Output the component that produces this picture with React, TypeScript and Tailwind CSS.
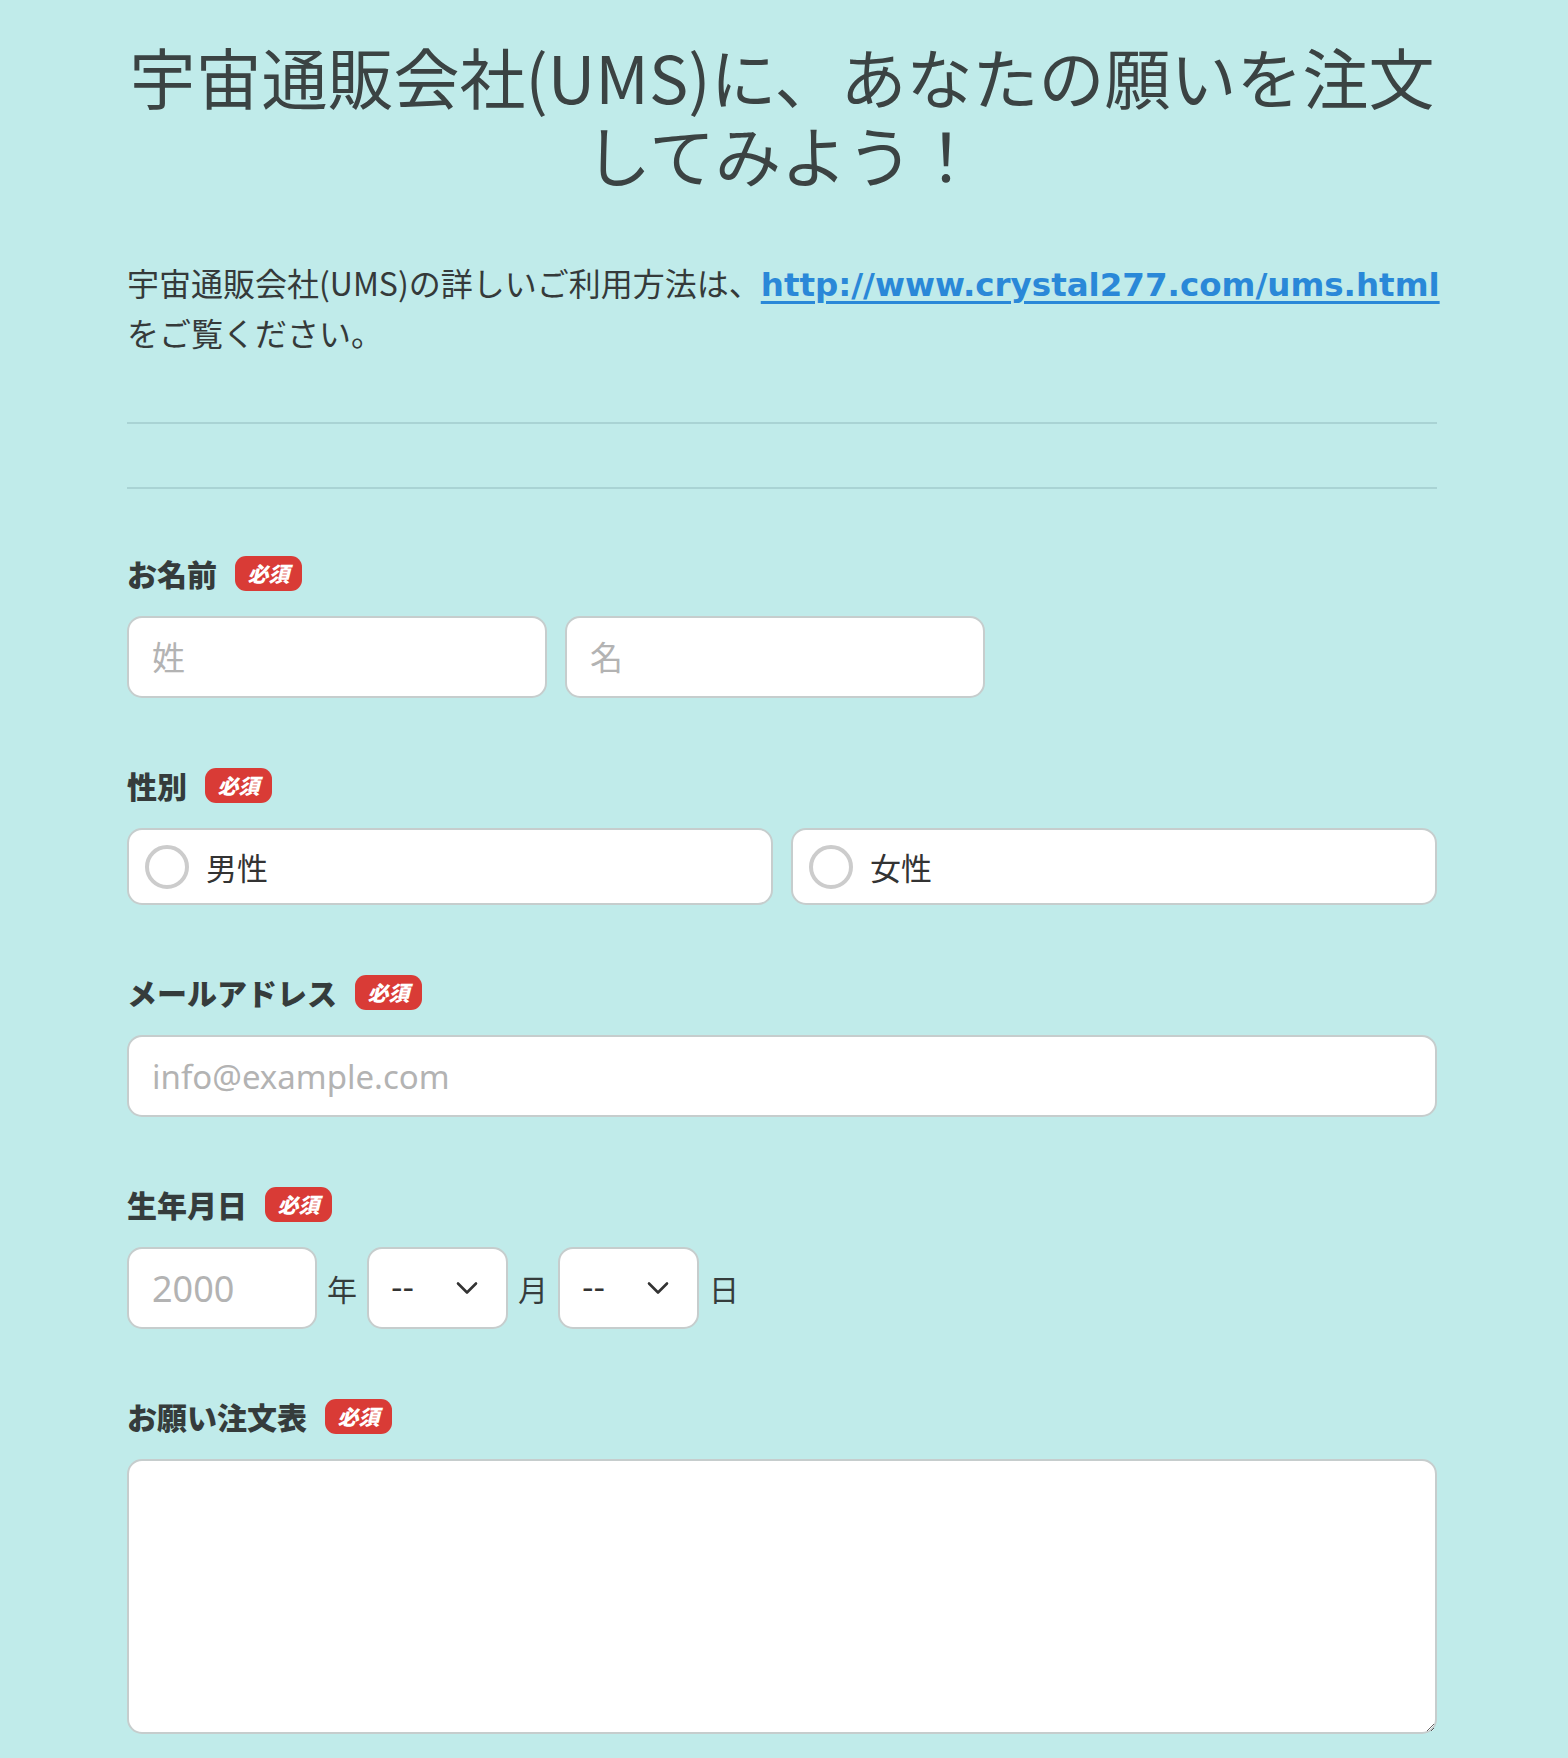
import React from "react";

const Badge = () => (
  <span className="inline-flex h-[35px] w-[67px] items-center justify-center rounded-[11px] bg-[#d93b36] font-['Noto_Sans_CJK_JP',sans-serif] text-[21px] font-black italic leading-none text-white">
    必須
  </span>
);

const Label = ({ children }: { children: React.ReactNode }) => (
  <div className="flex h-[40px] items-center gap-[18px]">
    <span className="font-['Noto_Sans_CJK_JP',sans-serif] text-[30px] font-black leading-[40px] text-[#353c3c]">
      {children}
    </span>
    <Badge />
  </div>
);

const Chevron = () => (
  <svg
    className="pointer-events-none absolute right-[30px] top-1/2 -translate-y-1/2"
    width="22"
    height="13"
    viewBox="0 0 22 13"
    fill="none"
    stroke="#333"
    strokeWidth="2.6"
    strokeLinecap="round"
    strokeLinejoin="round"
  >
    <polyline points="2,2 11,11 20,2" />
  </svg>
);

const Select = () => (
  <div className="relative h-[82px] w-[141px]">
    <select className="h-full w-full appearance-none rounded-[15px] border-2 border-[#c6cdcd] bg-white pl-[22px] font-['DejaVu_Sans',sans-serif] text-[32px] text-[#333] outline-none">
      <option>--</option>
    </select>
    <Chevron />
  </div>
);

const Radio = ({ label }: { label: string }) => (
  <label className="flex h-[77px] flex-1 items-center gap-[17px] rounded-[15px] border-2 border-[#c6cdcd] bg-white pl-[16px]">
    <span className="h-[44px] w-[44px] rounded-full border-[4px] border-[#cccccc] bg-white" />
    <span className="font-['Noto_Sans_CJK_JP',sans-serif] text-[31px] leading-none text-[#333]">{label}</span>
  </label>
);

const inputCls =
  "rounded-[15px] border-2 border-[#c6cdcd] bg-white px-[23px] font-['Noto_Sans','Noto_Sans_CJK_JP',sans-serif] text-[33px] text-[#333] outline-none placeholder:text-[#b3b3b3]";

export default function App() {
  return (
    <div className="min-h-screen bg-[#c0ebea] pb-[60px]">
      <div className="ml-[127px] w-[1310px] pt-[36px]">
        <h1 className="text-center font-['Noto_Sans_CJK_JP',sans-serif] text-[66px] font-normal leading-[78px] text-[#3b4343]">
          <span className="block whitespace-nowrap">宇宙通販会社(UMS)に、あなたの願いを注文</span>
          <span className="block whitespace-nowrap">してみよう！</span>
        </h1>

        <p className="mt-[67px] whitespace-nowrap font-['Noto_Sans_CJK_JP',sans-serif] text-[32px] leading-[47px] text-[#353a3a]">
          宇宙通販会社(UMS)の詳しいご利用方法は、
          <a
            href="#"
            className="font-['DejaVu_Sans',sans-serif] text-[32.5px] font-bold text-[#2a88d8] underline decoration-[3px] underline-offset-[5px]"
          >
            http://www.crystal277.com/ums.html
          </a>
          <br />
          をご覧ください。
        </p>

        <div className="mt-[66px] h-[2px] bg-[#a9d3d4]" />
        <div className="mt-[63px] h-[2px] bg-[#a9d3d4]" />

        <div className="mt-[64px]">
          <Label>お名前</Label>
          <div className="mt-[23px] flex gap-[18px]">
            <input className={inputCls + " h-[82px] w-[420px]"} placeholder="姓" />
            <input className={inputCls + " h-[82px] w-[420px]"} placeholder="名" />
          </div>
        </div>

        <div className="mt-[67px]">
          <Label>性別</Label>
          <div className="mt-[23px] flex gap-[18px]">
            <Radio label="男性" />
            <Radio label="女性" />
          </div>
        </div>

        <div className="mt-[67px]">
          <Label>メールアドレス</Label>
          <div className="mt-[23px]">
            <input className={inputCls + " h-[82px] w-full"} placeholder="info@example.com" />
          </div>
        </div>

        <div className="mt-[67px]">
          <Label>生年月日</Label>
          <div className="mt-[23px] flex items-center gap-[10px] font-['Noto_Sans_CJK_JP',sans-serif] text-[30px] text-[#353c3c]">
            <input className={inputCls + " h-[82px] w-[190px] !text-[36px]"} placeholder="2000" />
            <span>年</span>
            <Select />
            <span>月</span>
            <Select />
            <span>日</span>
          </div>
        </div>

        <div className="mt-[67px]">
          <Label>お願い注文表</Label>
          <div className="mt-[23px]">
            <textarea className="block h-[275px] w-full rounded-[15px] border-2 border-[#c6cdcd] bg-white p-[20px] font-['Noto_Sans_CJK_JP',sans-serif] text-[30px] text-[#333] outline-none" />
          </div>
        </div>
      </div>
    </div>
  );
}
